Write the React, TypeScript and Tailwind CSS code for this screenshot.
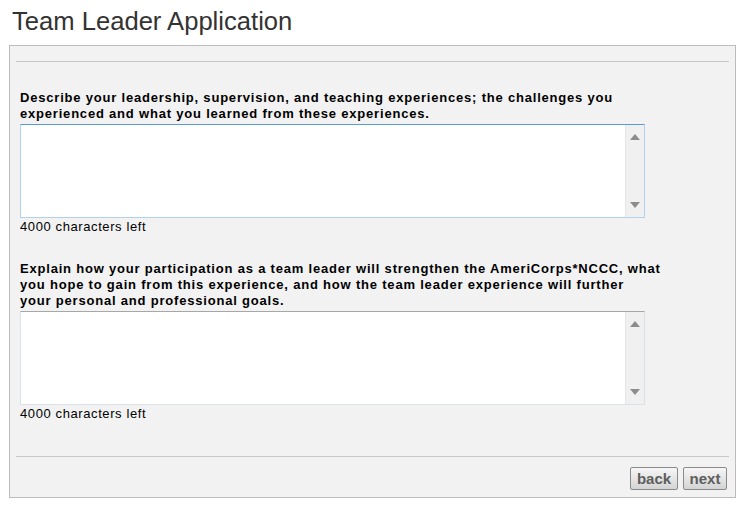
import React from "react";

function Box({ focused }: { focused?: boolean }) {
  return (
    <div
      className={
        "flex w-[625px] h-[94px] bg-white border " +
        (focused
          ? "border-[#b3d1ee] border-t-[#5b9bd5]"
          : "border-[#dbe1e8] border-t-[#a7a7a7]")
      }
    >
      <div className="flex-1" />
      <div className="w-[19px] flex flex-col items-center justify-between py-[9px] bg-[#f0f0f0] border-l border-[#e6e6e6]">
        <svg width="10" height="6" viewBox="0 0 10 6">
          <path d="M5 0 L10 6 L0 6 Z" fill="#8c8c8c" />
        </svg>
        <svg width="10" height="6" viewBox="0 0 10 6">
          <path d="M0 0 L10 0 L5 6 Z" fill="#8c8c8c" />
        </svg>
      </div>
    </div>
  );
}

function Question({ lines, first }: { lines: string[]; first?: boolean }) {
  return (
    <div className={first ? "mt-[28px]" : "mt-[26px]"}>
      <div className="w-[660px] text-[13px] leading-[16px] font-bold tracking-[0.8px] text-black">
        {lines.map((l) => (
          <div key={l}>{l}</div>
        ))}
      </div>
      <div className="mt-[2px]">
        <Box focused={first} />
      </div>
      <div className="pt-[1px] text-[13px] leading-[16px] tracking-[0.6px] text-black">4000 characters left</div>
    </div>
  );
}

export default function App() {
  return (
    <div className="w-[743px] h-[505px] bg-white font-['Liberation_Sans',Arial,sans-serif]">
      <h1 className="pl-[12px] pt-[7px] h-[45px] text-[25.6px] leading-[28px] text-[#333]">
        Team Leader Application
      </h1>
      <div className="ml-[9px] w-[727px] h-[453px] border border-[#bcbcbc] bg-[#f2f2f2] px-[6px]">
        <div className="mt-[15px] border-t border-[#c8c8c8]" />
        <div className="px-[4px]">
          <Question
            first
            lines={[
              "Describe your leadership, supervision, and teaching experiences; the challenges you",
              "experienced and what you learned from these experiences.",
            ]}
          />
          <Question
            lines={[
              "Explain how your participation as a team leader will strengthen the AmeriCorps*NCCC, what",
              "you hope to gain from this experience, and how the team leader experience will further",
              "your personal and professional goals.",
            ]}
          />
        </div>
        <div className="mt-[34px] border-t border-[#c8c8c8]" />
        <div className="flex justify-end gap-[5px] pr-[2px] mt-[10px]">
          <button className="w-[48px] h-[23px] rounded-[2px] border border-[#8a8a8a] bg-gradient-to-b from-[#f6f6f6] to-[#d4d4d4] text-[15px] font-bold text-[#5e5e5e] leading-none">
            back
          </button>
          <button className="w-[44px] h-[23px] rounded-[2px] border border-[#8a8a8a] bg-gradient-to-b from-[#f6f6f6] to-[#d4d4d4] text-[15px] font-bold text-[#5e5e5e] leading-none">
            next
          </button>
        </div>
      </div>
    </div>
  );
}
